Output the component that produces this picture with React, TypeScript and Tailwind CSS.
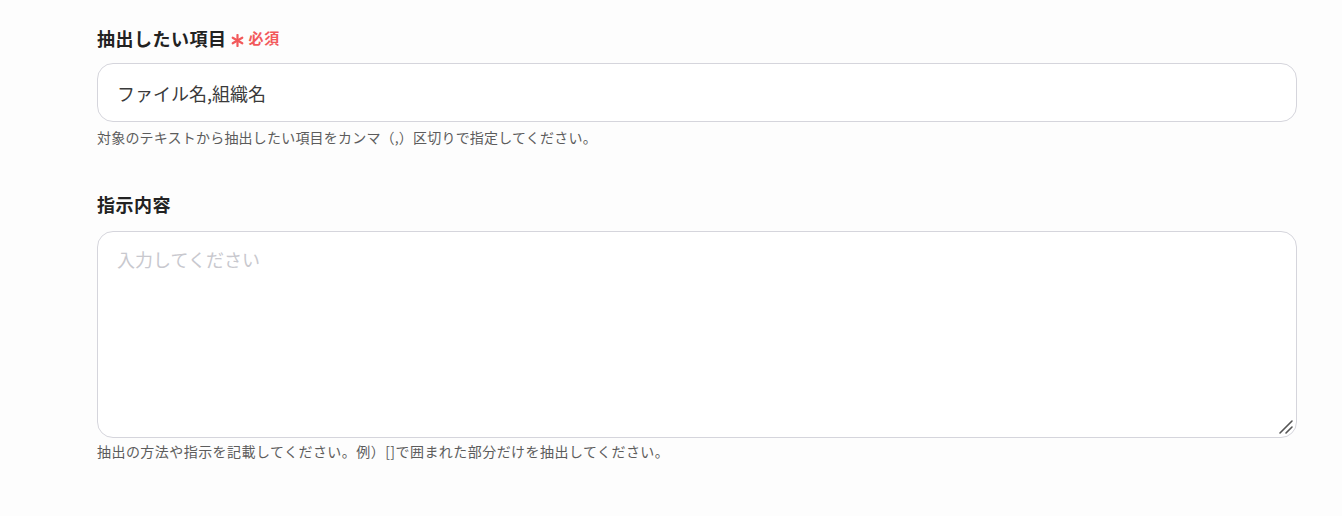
const font = {
  fontFamily: '"Noto Sans CJK JP", "Noto Sans", sans-serif',
};

export default function App() {
  return (
    <div
      className="min-h-[516px] w-full bg-[#fdfdfd] text-[#2b2b2b]"
      style={font}
    >
      <div className="w-[1200px] ml-[97px] pt-[24px]">
        {/* Field 1 */}
        <div className="flex items-center gap-[4px] h-[28px]">
          <span className="text-[18px] tracking-[0.5px] font-bold text-[#222]">抽出したい項目</span>
          <span className="flex items-center text-[15px] tracking-[0.8px] font-bold text-[#f2595b]">
            <svg className="mr-[5px] mt-[4px]" width="13" height="13" viewBox="0 0 13 13">
              <g stroke="#f2595b" strokeWidth="2.2" strokeLinecap="round">
                <line x1="6.5" y1="1" x2="6.5" y2="12" />
                <line x1="1.7" y1="3.75" x2="11.3" y2="9.25" />
                <line x1="1.7" y1="9.25" x2="11.3" y2="3.75" />
              </g>
            </svg>
            必須
          </span>
        </div>
        <input
          readOnly
          value="ファイル名,組織名"
          className="mt-[11px] block w-full h-[59px] rounded-[16px] border border-[#d5d5dc] bg-white px-[19px] text-[18px] text-[#3a3a3a] outline-none"
          style={font}
        />
        <p className="mt-[5px] text-[14px] tracking-[0.2px] leading-[20px] text-[#5c5c5c]">
          対象のテキストから抽出したい項目をカンマ（,）区切りで指定してください。
        </p>

        {/* Field 2 */}
        <div className="mt-[43px] h-[28px] flex items-center">
          <span className="text-[18px] tracking-[0.5px] font-bold text-[#222]">指示内容</span>
        </div>
        <div className="relative mt-[13px]">
          <textarea
            placeholder="入力してください"
            className="block w-full h-[207px] rounded-[16px] border border-[#d5d5dc] bg-white px-[19px] py-[14px] text-[18px] text-[#3a3a3a] placeholder:text-[#c8c8ce] outline-none resize-none"
            style={font}
          />
          <svg
            className="absolute right-[3px] bottom-[3px] pointer-events-none"
            width="16"
            height="16"
            viewBox="0 0 16 16"
          >
            <g stroke="#555" strokeWidth="1.6" strokeLinecap="round">
              <line x1="2" y1="14" x2="14" y2="2" />
              <line x1="8" y1="14" x2="14" y2="8" />
            </g>
          </svg>
        </div>
        <p className="mt-[3px] text-[14px] tracking-[0.45px] leading-[20px] text-[#5c5c5c]">
          抽出の方法や指示を記載してください。例）[]で囲まれた部分だけを抽出してください。
        </p>
      </div>
    </div>
  );
}
